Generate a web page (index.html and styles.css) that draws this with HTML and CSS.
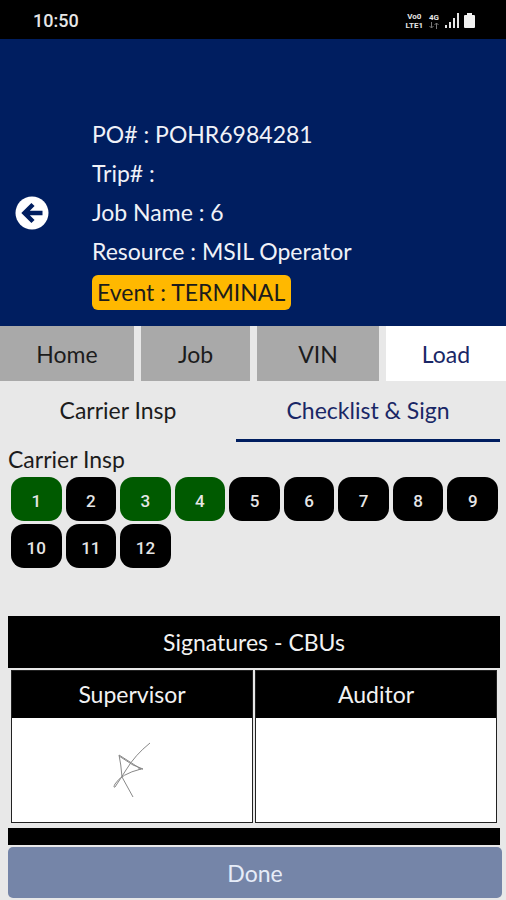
FILE: index.html
```html
<!DOCTYPE html>
<html lang="en">
<head>
<meta charset="utf-8">
<meta name="viewport" content="width=device-width, initial-scale=1">
<title>Checklist &amp; Sign</title>
<link rel="stylesheet" href="styles.css">
</head>
<body>
<div class="app">
  <div class="status-bar">
    <span class="clock">10:50</span>
    <div class="status-icons">
      <span class="net"><span>Vo0</span><span>LTE1</span></span>
      <span class="net net-data"><span>4G</span>
        <svg width="12" height="7" viewBox="0 0 12 7" fill="none" stroke="#777"><path d="M3.500 0v6M1.500 4l2 2 2-2M8.500 7V1M6.500 3l2-2 2 2"/></svg>
      </span>
      <svg class="signal" width="14" height="15" viewBox="0 0 14 15" fill="#e6e6e6"><path d="M0 12h2v3H0zM4 9h2v6H4zM8 5h2v10H8zM12 0h2v15h-2z"/></svg>
      <svg width="11" height="15" viewBox="0 0 11 15" fill="#f2f2f2"><path d="M3 0h5v2h2q1 0 1 1v11q0 1-1 1H1q-1 0-1-1V3q0-1 1-1h2z"/></svg>
    </div>
  </div>

  <header class="job-header">
    <button class="back" type="button" aria-label="Back">
      <svg width="34" height="34" viewBox="0 0 34 34"><circle cx="17" cy="17" r="16.500" fill="#fff"/><path d="M18 8.500 9.500 17l8.500 8.500M9.500 17H27.500" fill="none" stroke="#001e60" stroke-width="4.500"/></svg>
    </button>
    <div class="job-info">
      <div>PO# : POHR6984281</div>
      <div>Trip# :</div>
      <div>Job Name : 6</div>
      <div>Resource : MSIL Operator</div>
      <div class="event">Event : TERMINAL</div>
    </div>
  </header>

  <nav class="main-tabs">
    <button class="tab-home" type="button">Home</button>
    <button class="tab-job" type="button">Job</button>
    <button class="tab-vin" type="button">VIN</button>
    <button class="tab-load active" type="button">Load</button>
  </nav>

  <main class="content">
    <nav class="sub-tabs">
      <button type="button">Carrier Insp</button>
      <button class="active" type="button">Checklist &amp; Sign</button>
    </nav>

    <h2 class="group-title">Carrier Insp</h2>
    <div class="checks">
      <button class="done" type="button">1</button>
      <button type="button">2</button>
      <button class="done" type="button">3</button>
      <button class="done" type="button">4</button>
      <button type="button">5</button>
      <button type="button">6</button>
      <button type="button">7</button>
      <button type="button">8</button>
      <button type="button">9</button>
      <button type="button">10</button>
      <button type="button">11</button>
      <button type="button">12</button>
    </div>

    <h2 class="band">Signatures - CBUs</h2>
    <div class="signatures">
      <section class="signature">
        <h3>Supervisor</h3>
        <div class="pad">
          <svg width="38" height="56" viewBox="0 0 38 56" fill="none" stroke="#888"><path d="M37 1Q22 13 13 28Q8 36 2 45q-2 1 0-3Q8 32 28 27L6 13q2 9 3 22l11 20M6 14l14 9 10 4h-5"/></svg>
        </div>
      </section>
      <section class="signature">
        <h3>Auditor</h3>
        <div class="pad"></div>
      </section>
    </div>
    <div class="band"></div>
  </main>

  <footer class="footer">
    <button type="button">Done</button>
  </footer>
</div>
</body>
</html>
```

FILE: styles.css
```css
* {
  box-sizing: border-box;
}

body {
  margin: 0;
  background: #e8e8e8;
  color: #1c1c1c;
  font-family: Lato, "Liberation Sans", sans-serif;
  font-size: 23px;
}

button {
  margin: 0;
  padding: 0;
  border: 0;
  background: none;
  color: inherit;
  font: inherit;
}

h2,
h3 {
  margin: 0;
  font-size: inherit;
  font-weight: 400;
}

.app {
  display: flex;
  flex-direction: column;
  height: 100vh;
}

.status-bar {
  display: flex;
  flex: none;
  align-items: center;
  justify-content: space-between;
  height: 39px;
  padding: 2px 31px 0 33px;
  background: #000;
  color: #e6e6e6;
  font-family: Roboto, sans-serif;
}

.clock {
  font-size: 18px;
  font-weight: 500;
}

.status-icons {
  display: flex;
  align-items: center;
  gap: 5px;
}

.net {
  display: flex;
  flex-direction: column;
  align-items: center;
  font-size: 8px;
  font-weight: 700;
  line-height: 9px;
}

.job-header {
  display: flex;
  flex: none;
  align-items: center;
  gap: 43px;
  padding: 76px 15px 16px;
  background: #001e60;
  color: #f0f2f8;
}

.back {
  display: flex;
}

.job-info {
  line-height: 39px;
}

.event {
  width: fit-content;
  margin-top: 4px;
  padding: 0 6px 0 5px;
  border-radius: 6px;
  background: #ffb800;
  color: #1c1c1c;
  line-height: 35px;
}

.main-tabs {
  display: flex;
  flex: none;
  gap: 7px;
}

.main-tabs button {
  flex: 120 1 0;
  height: 55px;
  background: #a9a9a9;
}

.main-tabs .tab-home {
  flex-grow: 134;
}

.main-tabs .tab-job {
  flex-grow: 109;
}

.main-tabs .tab-vin {
  flex-grow: 122;
}

.main-tabs .active {
  background: #fff;
  color: #1a2766;
}

.content {
  flex: 1;
  min-height: 0;
  padding: 0 6px 0 8px;
  overflow-y: auto;
  scrollbar-width: none;
}

.sub-tabs {
  display: grid;
  grid-template-columns: 5fr 6fr;
  gap: 8px;
}

.sub-tabs button {
  height: 61px;
  border-bottom: 3px solid transparent;
}

.sub-tabs .active {
  border-color: #001e60;
  color: #1a2766;
}

.group-title {
  line-height: 34px;
}

.checks {
  display: grid;
  grid-template-columns: repeat(9, 1fr);
  gap: 3px 4px;
  padding: 1px 2px 0 3px;
}

.checks button {
  height: 44px;
  padding-top: 3px;
  border-radius: 13px;
  background: #000;
  color: #e6e6e6;
  font-family: Roboto, sans-serif;
  font-size: 17px;
  font-weight: 500;
}

.checks .done {
  background: #005a00;
}

.band {
  height: 52px;
  background: #000;
  color: #f2f2f2;
  line-height: 52px;
  text-align: center;
}

.checks + .band {
  margin-top: 48px;
}

.signatures {
  display: grid;
  grid-template-columns: 1fr 1fr;
  gap: 2px;
  padding: 2px 3px 5px;
}

.signature {
  border: 1px solid #222;
}

.signature h3 {
  background: #000;
  color: #f2f2f2;
  line-height: 47px;
  text-align: center;
}

.pad {
  display: flex;
  align-items: center;
  justify-content: center;
  height: 104px;
  background: #fff;
}

.footer {
  flex: none;
  padding: 2px 4px 2px 8px;
}

.footer button {
  display: block;
  width: 100%;
  height: 51px;
  border-radius: 5px;
  background: #7585a8;
  color: #e6ecf8;
}
```
